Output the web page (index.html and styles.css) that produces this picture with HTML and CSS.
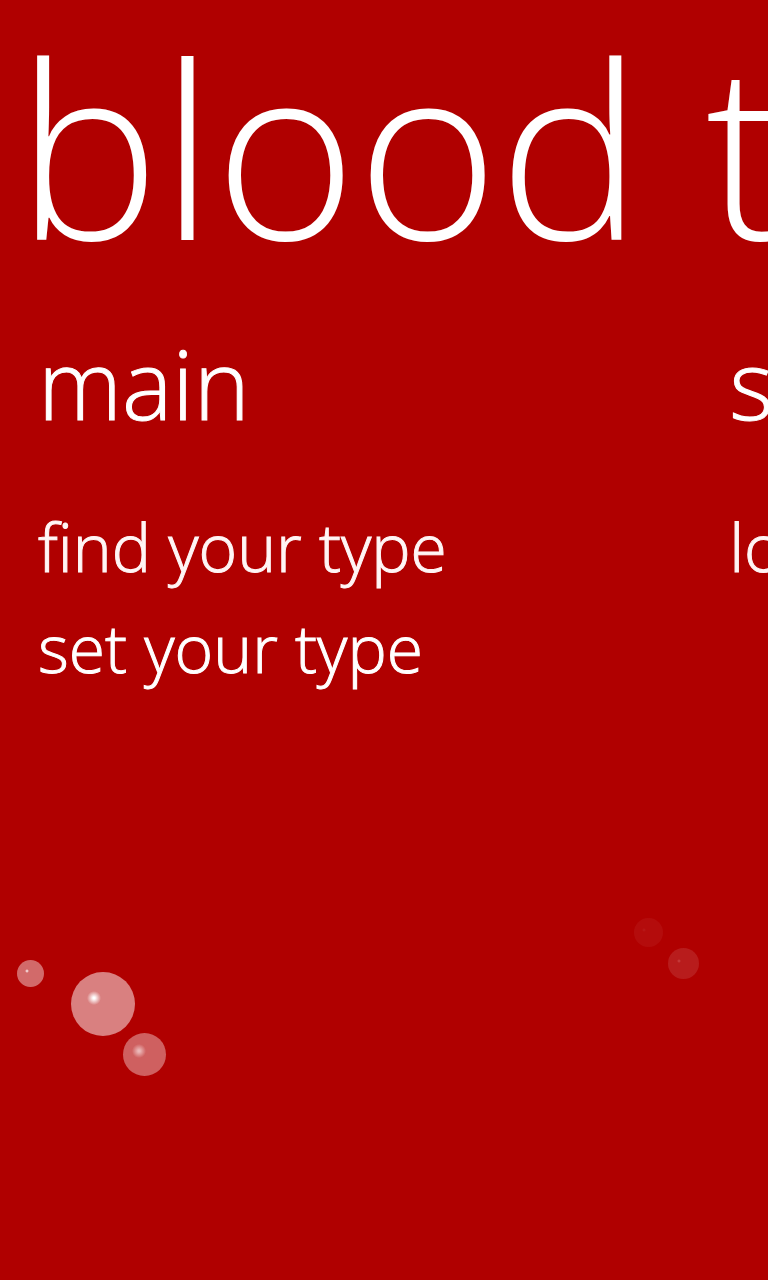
FILE: index.html
```html
<!DOCTYPE html>
<html lang="en">
<head>
<meta charset="utf-8">
<meta name="viewport" content="width=device-width, initial-scale=1">
<title>blood type</title>
<link rel="stylesheet" href="styles.css">
</head>
<body>
<main class="panorama">
  <h1 class="title">blood type</h1>
  <div class="sections">
    <section class="section">
      <h2 class="heading">main</h2>
      <nav class="menu">
        <a class="item soft" href="#find">find your type</a>
        <a class="item" href="#set">set your type</a>
      </nav>
    </section>
    <section class="section">
      <h2 class="heading">settings</h2>
      <nav class="menu">
        <a class="item soft" href="#lock">lock screen</a>
      </nav>
    </section>
  </div>
  <div class="bubbles" aria-hidden="true">
    <span class="bubble b1"></span>
    <span class="bubble b2"></span>
    <span class="bubble b3"></span>
    <span class="bubble b4"></span>
    <span class="bubble b5"></span>
  </div>
</main>
</body>
</html>
```
FILE: styles.css
```css
body {
  margin: 0;
  background: #b00000;
  color: #fff;
  font-family: "Open Sans", "Noto Sans", sans-serif;
  font-weight: 300;
}
.panorama {
  position: relative;
  min-height: 100vh;
  overflow: hidden;
}
.title {
  margin: 0;
  padding: 0 0 14px 16px;
  font-size: 242px;
  line-height: 292px;
  font-weight: 300;
  white-space: nowrap;
}
.sections {
  display: flex;
}
.section {
  flex: 0 0 90%;
  padding-left: 38px;
  box-sizing: border-box;
  white-space: nowrap;
}
.heading {
  margin: 0 0 36px;
  font-size: 95px;
  line-height: 154px;
  font-weight: 300;
  -webkit-text-stroke: 1px currentColor;
}
.menu {
  display: flex;
  flex-direction: column;
  align-items: flex-start;
}
.item {
  color: #fff;
  font-size: 66px;
  line-height: 101px;
  text-decoration: none;
  -webkit-text-stroke: 1px currentColor;
}
.soft {
  color: #fff5f5;
}
.bubble {
  position: absolute;
  border-radius: 50%;
}
.b1 { left: 17px; top: 960px; width: 27px; height: 27px; background: radial-gradient(circle at 10px 11px, #fff 0, #d26a6a 2px); }
.b2 { left: 71px; top: 972px; width: 64px; height: 64px; background: radial-gradient(circle at 23px 26px, #fff 0, #fff 1px, #d98080 7px); }
.b3 { left: 123px; top: 1033px; width: 43px; height: 43px; background: radial-gradient(circle at 16px 18px, #ebb8b8 0, #ebb8b8 1px, #cf6060 7px); }
.b4 { left: 634px; top: 918px; width: 29px; height: 29px; background: radial-gradient(circle at 10px 12px, #b81c1c 0, #b40c0c 2px); }
.b5 { left: 668px; top: 948px; width: 31px; height: 31px; background: radial-gradient(circle at 11px 13px, #c84848 0, #b81c1c 2px); }
```
